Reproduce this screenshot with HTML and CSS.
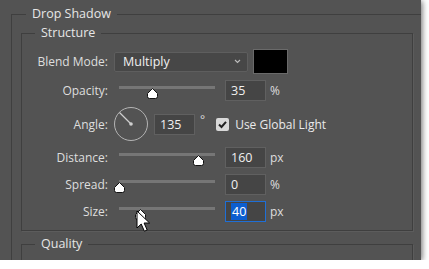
FILE: index.html
```html
<!DOCTYPE html>
<html lang="en">
<head>
    <meta charset="UTF-8">
    <title>Layer Style - Drop Shadow</title>
    <link rel="stylesheet" href="styles.css">
</head>
<body>

    <div class="panel">
        <fieldset class="group outer">
            <legend>Drop Shadow</legend>

            <fieldset class="group structure">
                <legend>Structure</legend>

                <div class="row">
                    <span class="label">Blend Mode:</span>
                    <div class="select">
                        <span>Multiply</span>
                        <svg class="chevron" width="7" height="5" viewBox="0 0 7 5"><path d="M1 1 L3.5 3.5 L6 1" fill="none" stroke="#bdbdbd" stroke-width="1.1"/></svg>
                    </div>
                    <div class="swatch"></div>
                </div>

                <div class="row">
                    <span class="label">Opacity:</span>
                    <div class="slider">
                        <div class="track"></div>
                        <svg class="thumb" style="left: 32.5px" width="11" height="11" viewBox="0 0 11 11"><path d="M5.5 0.5 L10.5 5.5 L10.5 8.5 Q10.5 10.5 8.5 10.5 L2.5 10.5 Q0.5 10.5 0.5 8.5 L0.5 5.5 Z"/></svg>
                    </div>
                    <div class="field">35</div>
                    <span class="unit">%</span>
                </div>

                <div class="row">
                    <span class="label">Angle:</span>
                    <svg class="dial" width="34" height="34" viewBox="0 0 34 34">
                        <circle cx="17" cy="17" r="16.5" fill="none" stroke="#b4b4b4" stroke-width="1"/>
                        <line x1="17" y1="17" x2="5.5" y2="5.5" stroke="#cfcfcf" stroke-width="1.2"/>
                        <circle cx="17" cy="17" r="1.8" fill="#cfcfcf"/>
                    </svg>
                    <div class="field angle-field">135</div>
                    <span class="deg">°</span>
                    <span class="check">
                        <svg width="13" height="13" viewBox="0 0 13 13"><path d="M3 6.5 L5.5 9 L10 3.8" fill="none" stroke="#222" stroke-width="2"/></svg>
                    </span>
                    <span class="check-label">Use Global Light</span>
                </div>

                <div class="row">
                    <span class="label">Distance:</span>
                    <div class="slider">
                        <div class="track"></div>
                        <svg class="thumb" style="left: 78.5px" width="11" height="11" viewBox="0 0 11 11"><path d="M5.5 0.5 L10.5 5.5 L10.5 8.5 Q10.5 10.5 8.5 10.5 L2.5 10.5 Q0.5 10.5 0.5 8.5 L0.5 5.5 Z"/></svg>
                    </div>
                    <div class="field">160</div>
                    <span class="unit">px</span>
                </div>

                <div class="row">
                    <span class="label">Spread:</span>
                    <div class="slider">
                        <div class="track"></div>
                        <svg class="thumb" style="left: -0.5px" width="11" height="11" viewBox="0 0 11 11"><path d="M5.5 0.5 L10.5 5.5 L10.5 8.5 Q10.5 10.5 8.5 10.5 L2.5 10.5 Q0.5 10.5 0.5 8.5 L0.5 5.5 Z"/></svg>
                    </div>
                    <div class="field">0</div>
                    <span class="unit">%</span>
                </div>

                <div class="row">
                    <span class="label">Size:</span>
                    <div class="slider">
                        <div class="track"></div>
                        <svg class="thumb" style="left: 20.5px" width="11" height="11" viewBox="0 0 11 11"><path d="M5.5 0.5 L10.5 5.5 L10.5 8.5 Q10.5 10.5 8.5 10.5 L2.5 10.5 Q0.5 10.5 0.5 8.5 L0.5 5.5 Z"/></svg>
                        <!-- mouse pointer sitting on the thumb -->
                        <svg class="cursor" width="15" height="23" viewBox="0 0 15 23"><path d="M1 1 L1 18 L5.2 14 L8.4 21.2 L11.2 20 L8.1 13 L13.6 13 Z" fill="#fff" stroke="#000" stroke-width="1"/></svg>
                    </div>
                    <div class="field active"><span class="sel">40</span></div>
                    <span class="unit">px</span>
                </div>
            </fieldset>

            <fieldset class="group quality">
                <legend>Quality</legend>
            </fieldset>
        </fieldset>
    </div>

</body>
</html>
```

FILE: styles.css
```css
body {
    margin: 0;
    background-color: #ffffff;
    font-family: 'Open Sans', 'Noto Sans', sans-serif;
    font-size: 12px;
    color: #dedede;
}
.panel {
    width: 421px;
    height: 260px;
    box-sizing: border-box;
    padding: 5px 0 0 11px;
    background-color: #535353;
    overflow: hidden;
    box-shadow: 1px 1px 6px rgba(0, 0, 0, 0.6);
}
.group {
    margin: 0;
    border: 1px solid #3f3f3f;
    box-shadow: 1px 1px 0 #5c5c5c;
    min-width: 0;
}
.group legend {
    padding: 0 6px;
    line-height: 18px;
    font-size: 12.5px;
    color: #e6e6e6;
}
.outer {
    margin-right: -40px;
    height: 300px;
    padding: 1px 0 0 9px;
}
.outer > legend {
    margin-left: 5px;
}
.structure {
    width: 392px;
    box-sizing: border-box;
    padding: 7px 0 8px 0;
}
.structure > legend {
    margin-left: 13px;
}
.quality {
    width: 392px;
    box-sizing: border-box;
    height: 40px;
    margin-top: 4px;
    padding: 0;
}
.quality > legend {
    margin-left: 13px;
}
.row {
    display: flex;
    align-items: center;
    margin-top: 6px;
}
.row:first-of-type {
    margin-top: 0;
}
.label {
    width: 86px;
    text-align: right;
    margin-right: 6px;
    white-space: nowrap;
}
.select {
    width: 134px;
    height: 20px;
    box-sizing: border-box;
    display: flex;
    align-items: center;
    justify-content: space-between;
    padding: 0 6px 0 8px;
    background-color: #474747;
    border: 1px solid #5e5e5e;
    border-radius: 2px;
    color: #f0f0f0;
    font-size: 12.5px;
}
.swatch {
    width: 35px;
    height: 25px;
    box-sizing: border-box;
    margin-left: 5px;
    background-color: #000;
    border: 1px solid #6a6a6a;
}
.slider {
    position: relative;
    width: 106px;
    height: 21px;
}
.track {
    margin: 6px 5px 0 5px;
    height: 3px;
    background-color: #767676;
}
.thumb {
    position: absolute;
    top: 8px;
    fill: #ffffff;
    stroke: #111;
    stroke-width: 1;
}
.cursor {
    position: absolute;
    left: 22px;
    top: 9px;
}
.field {
    width: 41px;
    height: 21px;
    box-sizing: border-box;
    margin-left: 5px;
    padding-left: 5px;
    line-height: 19px;
    background-color: #454545;
    border: 1px solid #606060;
    color: #f0f0f0;
    font-size: 12.5px;
}
.field.active {
    border-color: #1f6fd6;
}
.sel {
    background-color: #0c5ed0;
    color: #fff;
    padding: 0 1px;
}
.angle-field {
    margin-left: 6px;
}
.unit {
    margin-left: 4px;
}
.deg {
    margin-left: 5px;
    align-self: flex-start;
    margin-top: 4px;
}
.check {
    width: 13px;
    height: 13px;
    margin-left: 11px;
    margin-right: 6px;
    background-color: #d9d9d9;
    border-radius: 2px;
}
.check svg {
    display: block;
}
.check-label {
    color: #eaeaea;
    font-size: 12px;
}
```
